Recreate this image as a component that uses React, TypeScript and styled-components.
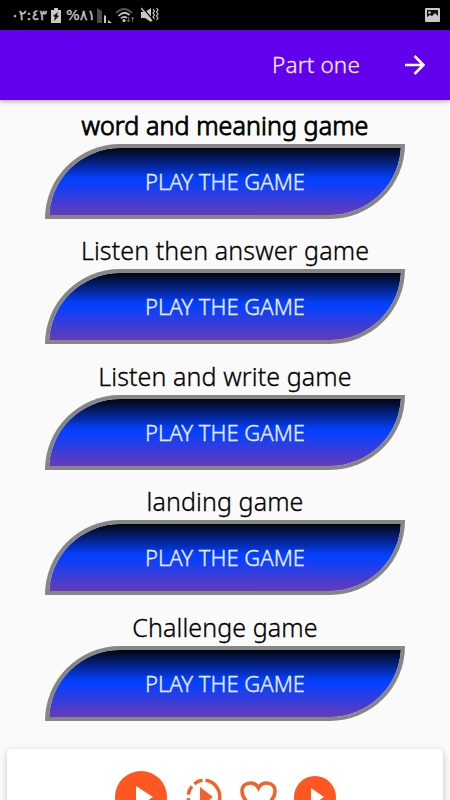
import React from 'react';
import styled, { createGlobalStyle } from 'styled-components';

const Global = createGlobalStyle`
  * { box-sizing: border-box; }
  body { margin: 0; background: #fafafa; overflow: hidden; font-family: 'Noto Sans', sans-serif; }
`;

const Screen = styled.div`
  width: 450px;
  height: 800px;
  overflow: hidden;
  display: flex;
  flex-direction: column;
  background: #fafafa;
`;

const StatusBar = styled.div`
  flex: none;
  height: 30px;
  background: #000;
  color: #c8c8c8;
  display: flex;
  align-items: center;
  justify-content: space-between;
  padding: 0 10px 0 11px;
`;

const StatusGroup = styled.div`
  display: flex;
  align-items: center;
`;

const StatusText = styled.span<{ $width: number; $gap: number; $spacing?: number }>`
  font-family: 'DejaVu Sans', sans-serif;
  font-size: 14.5px;
  letter-spacing: ${(p) => p.$spacing ?? 0}px;
  -webkit-text-stroke: 0.3px #c8c8c8;
  line-height: 20px;
  width: ${(p) => p.$width}px;
  margin-right: ${(p) => p.$gap}px;
  white-space: nowrap;
`;

const Icon = styled.svg<{ $gap?: number }>`
  display: block;
  flex: none;
  margin-right: ${(p) => p.$gap ?? 0}px;
`;

const AppBar = styled.header`
  flex: none;
  height: 70px;
  display: flex;
  align-items: center;
  justify-content: flex-end;
  gap: 44px;
  padding-right: 24px;
  background: #6200ee;
  color: #f3eaff;
  box-shadow: 0 1px 5px rgba(0, 0, 0, 0.35);
`;

const AppTitle = styled.h1`
  margin: 0;
  font-size: 22.5px;
  font-weight: 300;
  line-height: 30px;
  letter-spacing: 0.15px;
  -webkit-text-stroke: 0.3px #f3eaff;
`;

const GameList = styled.main`
  flex: none;
  height: 649px;
  padding: 4px 45px 0;
`;

const Game = styled.section`
  height: 125.4px;
`;

const GameTitle = styled.h2<{ $strong?: boolean }>`
  margin: 0;
  height: 40px;
  line-height: 42px;
  font-size: 25px;
  font-weight: 300;
  letter-spacing: 0.1px;
  -webkit-text-stroke: ${(p) => (p.$strong ? 0.95 : 0.3)}px #000;
  text-align: center;
  white-space: nowrap;
  color: #000;
`;

const PlayButton = styled.button`
  display: block;
  width: 360px;
  height: 75px;
  padding: 0 0 1px;
  border: 4px solid #868686;
  border-radius: 75px 0 75px 0;
  background: linear-gradient(#020510 0%, #0540ff 46%, #0540ff 50%, #673ab7 100%) padding-box;
  color: #e8eeff;
  font: 300 22px/30px 'Noto Sans', sans-serif;
  -webkit-text-stroke: 0.35px #e8eeff;
  text-align: center;
`;

const Player = styled.footer`
  flex: none;
  width: 436px;
  height: 96px;
  margin: 0 auto;
  padding-top: 22px;
  display: flex;
  justify-content: center;
  border-radius: 5px;
  background: #fff;
  box-shadow: 0 2px 7px rgba(0, 0, 0, 0.22);
`;

const games = [
  { title: 'word and meaning game', strong: true },
  { title: 'Listen then answer game' },
  { title: 'Listen and write game' },
  { title: 'landing game' },
  { title: 'Challenge game' },
];

export default function App() {
  return (
    <Screen>
      <Global />
      <StatusBar>
        <StatusGroup>
          <StatusText $width={34} $gap={6}>٠٢:٤٣</StatusText>
          <Icon width="10" height="15" viewBox="0 0 10 15" $gap={5}>
            <path d="M0 2h3V0h4v2h3v13H0z" fill="#c8c8c8" />
            <path d="M7 4 2 8l2 1-1 4 5-5-2-1z" fill="#111" />
          </Icon>
          <StatusText $width={25} $gap={6} $spacing={-1.6}>%٨١</StatusText>
          <Icon width="16" height="16" viewBox="0 0 16 16" $gap={2}>
            <path d="M0 1 5 4v12H0z" fill="#4a4a4a" />
            <path d="M7 8l2 1v7H7z M11 13l4 3h-4z" fill="#c8c8c8" />
          </Icon>
          <Icon width="20" height="16" viewBox="0 0 20 16" $gap={6}>
            <path d="M1 6Q9-2 17 6" fill="none" stroke="#555" strokeWidth="1.8" />
            <path d="M3.5 9Q9 3 14.5 8M6 11.5Q9 8.5 12 11" fill="none" stroke="#c8c8c8" strokeWidth="1.7" />
            <circle cx="9" cy="13.5" r="1.6" fill="#c8c8c8" />
            <path d="M13.5 10v5m-1.5-2 1.5 2 1.5-2M17.5 15v-5M16 12l1.5-2 1.5 2" fill="none" stroke="#666" />
          </Icon>
          <Icon width="18" height="16" viewBox="0 0 18 16">
            <path d="M0 5h4l6-4v14l-6-4H0z" fill="#c8c8c8" />
            <path d="M1 0l11 13" stroke="#000" strokeWidth="1.2" />
            <path d="M0 1l11 13" stroke="#c8c8c8" strokeWidth="1.4" />
            <path d="M12 2l1.5 2-1.5 2 1.5 2-1.5 2 1.5 2M15.5 1 17 3l-1.5 2L17 7l-1.5 2 1.5 2-1.5 2" fill="none" stroke="#c8c8c8" strokeWidth="1.2" />
          </Icon>
        </StatusGroup>
        <Icon width="15" height="14" viewBox="0 0 15 14">
          <rect width="15" height="14" rx="1" fill="#c8c8c8" />
          <path d="M2 2h11v6l-3-3-3 3-2-1-3 2z" fill="#111" />
          <circle cx="4.5" cy="4.5" r="1.3" fill="#c8c8c8" />
        </Icon>
      </StatusBar>
      <AppBar>
        <AppTitle>Part one</AppTitle>
        <Icon width="22" height="20" viewBox="0 0 22 20">
          <path d="M1 10h18M10.5 1l9 9-9 9" fill="none" stroke="#fff" strokeWidth="2.5" />
        </Icon>
      </AppBar>
      <GameList>
        {games.map((g) => (
          <Game key={g.title}>
            <GameTitle $strong={g.strong}>{g.title}</GameTitle>
            <PlayButton>PLAY THE GAME</PlayButton>
          </Game>
        ))}
      </GameList>
      <Player>
        <Icon width="52" height="52" viewBox="0 0 52 52" $gap={19}>
          <circle cx="26" cy="26" r="26" fill="#ff5722" />
          <path d="M21 15v22l17-11z" fill="#fff" />
        </Icon>
        <Icon width="37" height="52" viewBox="0 0 37 52" $gap={17}>
          <path d="M19.5 9.3A16.5 16.5 0 0 1 19.5 42" fill="none" stroke="#f4622c" strokeWidth="3.5" />
          <path d="M16.5 9.3A16.5 16.5 0 0 0 16.5 42" fill="none" stroke="#f4622c" strokeWidth="3.5" strokeDasharray="9 3.5" />
          <path d="M14 16v20l13-10z" fill="#f4622c" />
        </Icon>
        <Icon width="37" height="52" viewBox="0 0 37 52" $gap={17}>
          <path d="M18.5 42C10 34 2 28 2 20.5 2 15 6 12 10.500 12c3.500 0 6.500 2 8 5 1.500-3 4.500-5 8-5C31 12 35 15 35 20.500 35 28 27 34 18.500 42z" fill="none" stroke="#f4622c" strokeWidth="3.600" />
        </Icon>
        <Icon width="42" height="52" viewBox="0 0 42 52">
          <circle cx="21" cy="26" r="21" fill="#ff5722" />
          <path d="M17 17v18l13-9z" fill="#fff" />
        </Icon>
      </Player>
    </Screen>
  );
}
